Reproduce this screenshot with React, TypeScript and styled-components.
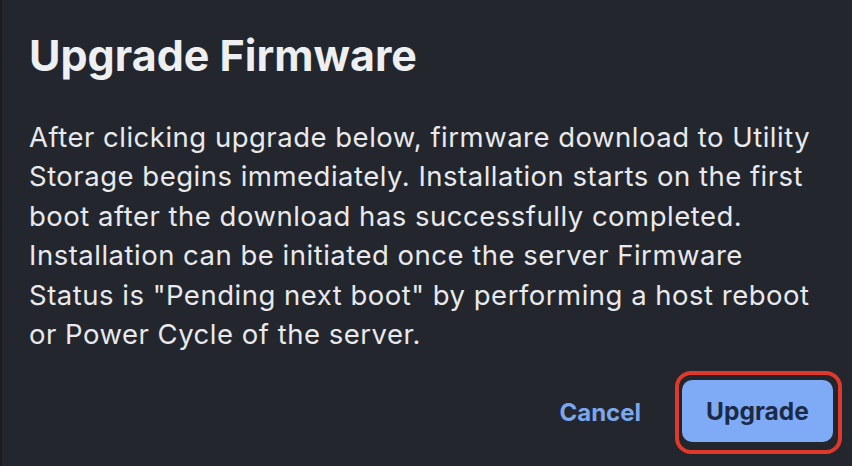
import React, { FC } from 'react';
import styled, { createGlobalStyle } from 'styled-components';

const GlobalStyle = createGlobalStyle`
  html, body {
    margin: 0;
    padding: 0;
    background: #23262d;
  }
  body {
    font-family: Inter, "Noto Sans", sans-serif;
  }
`;

const Dialog = styled.div`
  box-sizing: border-box;
  width: 852px;
  height: 466px;
  padding: 29px 10px 0 27px;
  background: #23262d;
  border-left: 2px solid #1b1d22;
  color: #e6e7ea;
  display: flex;
  flex-direction: column;
`;

const Title = styled.h1`
  margin: 0;
  font-size: 43px;
  font-weight: 700;
  line-height: 52px;
  color: #eeeff1;
`;

const Body = styled.p`
  margin: 37px 0 0;
  font-size: 27.5px;
  letter-spacing: 0.5px;
  line-height: 39.4px;
  font-weight: 400;
  color: #e8e9ec;
  white-space: nowrap;
`;

const Actions = styled.div`
  margin-top: auto;
  margin-bottom: 12px;
  display: flex;
  justify-content: flex-end;
  align-items: center;
  gap: 34px;
`;

const TextButton = styled.button`
  border: none;
  background: none;
  padding: 0;
  font-family: inherit;
  font-size: 24px;
  font-weight: 700;
  color: #7ba7ec;
  cursor: pointer;
`;

const FocusRing = styled.div`
  padding: 5px 5px 8px 3px;
  border: 4px solid #e0392b;
  border-radius: 16px;
`;

const PrimaryButton = styled.button`
  display: block;
  width: 151px;
  height: 62px;
  border: none;
  border-radius: 10px;
  background: #7eaaf6;
  font-family: inherit;
  font-size: 24.5px;
  font-weight: 700;
  color: #1c2b45;
  cursor: pointer;
`;

const lines = [
  'After clicking upgrade below, firmware download to Utility',
  'Storage begins immediately. Installation starts on the first',
  'boot after the download has successfully completed.',
  'Installation can be initiated once the server Firmware',
  'Status is "Pending next boot" by performing a host reboot',
  'or Power Cycle of the server.',
];

const App: FC = () => (
  <>
    <GlobalStyle />
    <Dialog>
      <Title>Upgrade Firmware</Title>
      <Body>
        {lines.map((line, i) => (
          <React.Fragment key={i}>
            {line}
            {i < lines.length - 1 && <br />}
          </React.Fragment>
        ))}
      </Body>
      <Actions>
        <TextButton type="button">Cancel</TextButton>
        <FocusRing>
          <PrimaryButton type="button">Upgrade</PrimaryButton>
        </FocusRing>
      </Actions>
    </Dialog>
  </>
);

export default App;
